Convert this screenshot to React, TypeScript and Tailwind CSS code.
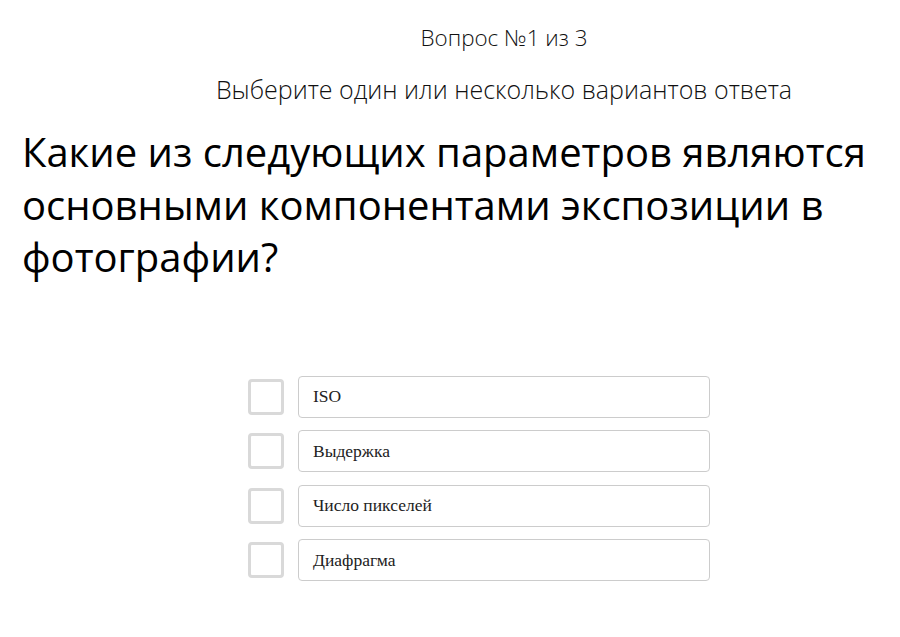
import React from "react";

const options = ["ISO", "Выдержка", "Число пикселей", "Диафрагма"];

export default function App() {
  return (
    <div className="min-h-[637px] w-[900px] bg-white text-black font-['Open_Sans',sans-serif]">
      {/* Header */}
      <div className="pl-[108px] pt-[23px] text-center">
        <p className="text-[22.4px] font-light leading-[30px] text-[#111]">
          Вопрос №1 из 3
        </p>
        <p className="mt-[20px] text-[25px] font-light leading-[32px] text-[#111]">
          Выберите один или несколько вариантов ответа
        </p>
      </div>

      {/* Question */}
      <h1 className="mt-[21px] px-[22px] text-[40px] font-normal leading-[52.5px]">
        Какие из следующих параметров являются основными компонентами экспозиции в фотографии?
      </h1>

      {/* Options */}
      <div className="mt-[92px] flex flex-col gap-[12.5px] pl-[248px]">
        {options.map((o) => (
          <label key={o} className="flex items-center gap-[14px]">
            <span className="h-[36px] w-[36px] rounded-[4px] border-[3px] border-[#d9d9d9] bg-white" />
            <span className="flex h-[42px] w-[412px] items-center rounded-[4px] border border-[#cccccc] pl-[14px] font-['Liberation_Serif',serif] text-[17.5px] text-[#222]">
              {o}
            </span>
          </label>
        ))}
      </div>
    </div>
  );
}
